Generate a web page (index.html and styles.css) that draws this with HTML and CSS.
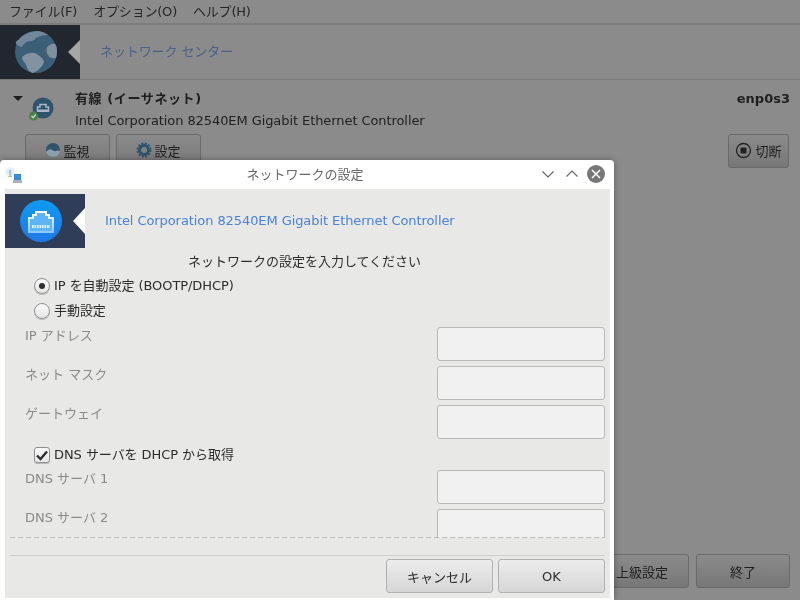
FILE: index.html
```html
<!DOCTYPE html>
<html lang="ja">
<head>
<meta charset="utf-8">
<title>ネットワークの設定</title>
<link rel="stylesheet" href="styles.css">
</head>
<body>
<div class="app">
  <nav class="menubar"><span>ファイル(F)</span><span>オプション(O)</span><span>ヘルプ(H)</span></nav>
  <header class="banner">
    <div class="banner-logo">
      <svg width="44" height="44" viewBox="0 0 44 44"><circle cx="22" cy="22" r="21" fill="#3c5f78"/><path d="M5 9Q13 1 25 1q5 1 9 4-7 0-12 3-3 4-8 3-4 2-6 6-3 0-6-3-1-3 4-5z" fill="#71889a"/><path d="M34 16q5-4 8-1 2 6 0 13-6 1-8-3-3-5 0-9z" fill="#7e909d"/><path d="M8 27q6-5 13-4 6 3 9 8-1 5-4 7-3 4-7 5-4-1-6-5-1-5-3-6-2-2-2-5z" fill="#8193a0"/></svg>
      <i class="notch notch-dim"></i>
    </div>
    <span class="banner-title">ネットワーク センター</span>
  </header>
  <section class="conn">
    <div class="conn-row">
      <span class="caret"></span>
      <svg class="conn-icon" width="28" height="28" viewBox="0 0 28 28"><circle cx="16" cy="12" r="10.500" fill="#2f536b"/><path d="M10.500 15v-4h2.500V8.500h6V11h2.500v4z" fill="none" stroke="#a9b8c2" stroke-width="1.500"/><path d="M10 13.500h12V16H10z" fill="#a9b8c2"/><circle cx="6.500" cy="20" r="4.500" fill="#4a8148"/><path d="M4.500 20l1.600 1.700 2.700-3.200" fill="none" stroke="#d5dfd5" stroke-width="1.200"/></svg>
      <div class="conn-text">
        <div class="conn-head"><b class="conn-name">有線 (イーサネット)</b><b>enp0s3</b></div>
        <div class="conn-desc">Intel Corporation 82540EM Gigabit Ethernet Controller</div>
      </div>
    </div>
    <div class="conn-actions">
      <div class="btn-group">
        <button class="btn btn-dim btn-wide"><svg width="16" height="16" viewBox="0 0 16 16"><circle cx="8" cy="8" r="7" fill="#2f536b"/><path d="M1 10q3-4 6-2t4 1 4 0q-1 6-7 6-5 0-7-5z" fill="#8ba0ad"/></svg>監視</button>
        <button class="btn btn-dim btn-wide"><svg width="16" height="16" viewBox="0 0 16 16"><circle cx="8" cy="8" r="4.500" fill="none" stroke="#2f536b" stroke-width="3"/><circle cx="8" cy="8" r="6.500" fill="none" stroke="#2f536b" stroke-width="2" stroke-dasharray="2 1.400"/></svg>設定</button>
      </div>
      <button class="btn btn-dim btn-stop"><svg width="17" height="17" viewBox="0 0 17 17"><circle cx="8.500" cy="8.500" r="7" fill="none" stroke="#222" stroke-width="1.300"/><rect x="5.500" y="5.500" width="6" height="6" rx="1" fill="#222"/></svg>切断</button>
    </div>
  </section>
  <footer class="app-footer">
    <button class="btn btn-dim btn-foot">上級設定</button>
    <button class="btn btn-dim btn-foot">終了</button>
  </footer>
</div>

<div class="dialog">
  <div class="titlebar">
    <svg class="tb-icon" width="18" height="18" viewBox="0 0 18 18"><defs><radialGradient id="glow"><stop offset="0" stop-color="#c6e4f5"/><stop offset="1" stop-color="#eef7fb"/></radialGradient></defs><circle cx="5" cy="5" r="5" fill="url(#glow)"/><path d="M4.500 3h1.200v6H4.500z" fill="#a5acb0"/><path d="M3 9h4v1H3z" fill="#b8bdc0"/><rect x="9" y="7" width="7" height="6" fill="#3b8ad2"/><rect x="8" y="13" width="9" height="3" fill="#aab0b5"/></svg>
    <span class="tb-title">ネットワークの設定</span>
    <div class="tb-controls">
      <svg width="14" height="14" viewBox="0 0 14 14"><path d="M1.500 4.500 7 10l5.500-5.500" fill="none" stroke="#666" stroke-width="1.200"/></svg>
      <svg width="14" height="14" viewBox="0 0 14 14"><path d="M1.500 9.500 7 4l5.500 5.500" fill="none" stroke="#666" stroke-width="1.200"/></svg>
      <svg class="tb-close" width="18" height="18" viewBox="0 0 18 18"><circle cx="9" cy="9" r="9" fill="#777"/><path d="M5 5l8 8M13 5l-8 8" stroke="#fff" stroke-width="1.500"/></svg>
    </div>
  </div>
  <div class="dlg-body">
    <div class="dlg-banner">
      <div class="dlg-logo">
        <svg width="42" height="42" viewBox="0 0 42 42"><defs><linearGradient id="blue" x1="0" y1="0" x2="0" y2="1"><stop offset="0" stop-color="#0f9bf0"/><stop offset="1" stop-color="#2078e6"/></linearGradient><linearGradient id="jack" x1="0" y1="0" x2="0" y2="1"><stop offset="0" stop-color="#ffffff"/><stop offset="1" stop-color="#8cc8f8"/></linearGradient></defs><circle cx="21" cy="21" r="21" fill="url(#blue)"/><path d="M9 32V18h4v-3h3v-3h10v3h3v3h4v14z" fill="#5fb4f4" stroke="url(#jack)" stroke-width="2"/><path d="M12 26.500h18" stroke="#e4f3fe" stroke-width="3" stroke-dasharray="1.700 0.800"/></svg>
        <i class="notch"></i>
      </div>
      <span class="dlg-banner-title">Intel Corporation 82540EM Gigabit Ethernet Controller</span>
    </div>
    <p class="prompt">ネットワークの設定を入力してください</p>
    <label class="choice choice-first"><span class="radio radio-on"></span>IP を自動設定 (BOOTP/DHCP)</label>
    <label class="choice"><span class="radio"></span>手動設定</label>
    <div class="field"><span>IP アドレス</span><i class="entry"></i></div>
    <div class="field"><span>ネット マスク</span><i class="entry"></i></div>
    <div class="field"><span>ゲートウェイ</span><i class="entry"></i></div>
    <label class="choice choice-check"><span class="check"><svg width="14" height="14" viewBox="0 0 14 14"><path d="M2 7.500l3.500 3.500L12 3.500" fill="none" stroke="#2d2d2d" stroke-width="2.400"/></svg></span>DNS サーバを DHCP から取得</label>
    <div class="field"><span>DNS サーバ 1</span><i class="entry"></i></div>
    <div class="field field-cut"><span>DNS サーバ 2</span><i class="entry"></i></div>
    <div class="dlg-footer">
      <button class="btn btn-dlg">キャンセル</button>
      <button class="btn btn-dlg">OK</button>
    </div>
  </div>
</div>
</body>
</html>
```
FILE: styles.css
```css
* { box-sizing: border-box; }
html, body { margin: 0; height: 100%; overflow: hidden; }
body {
  background: #8b8b8b;
  color: #1f1f1f;
  font: 13px "DejaVu Sans", "Noto Sans CJK JP", sans-serif;
  width: 800px;
  height: 600px;
  position: relative;
}
.app { height: 600px; display: flex; flex-direction: column; will-change: transform; }
.menubar {
  height: 25px;
  display: flex;
  gap: 16px;
  padding: 3px 9px 0;
  color: #262626;
  line-height: 17px;
  letter-spacing: -0.2px;
  border-bottom: 2px solid #7c7c7c;
}
.banner {
  height: 55px;
  display: flex;
  align-items: center;
  border-bottom: 1px solid #7a7a7a;
}
.banner-logo {
  width: 80px;
  height: 54px;
  background: #22262f;
  display: flex;
  align-items: center;
  padding-left: 14px;
  position: relative;
}
.notch {
  position: absolute;
  right: 0;
  top: 50%;
  margin-top: -13px;
  border-style: solid;
  border-width: 13px 12px 13px 0;
  border-color: transparent #fff transparent transparent;
}
.notch-dim { border-right-color: #a6a6a6; margin-top: -12px; border-width: 12px 12px 12px 0; }
.banner-title { margin: -3px 0 0 20px; color: #4d6185; letter-spacing: -0.1px; }
.conn { padding: 9px 10px 0 13px; }
.conn-row { display: flex; height: 42px; }
.caret {
  margin-top: 7px;
  width: 0;
  height: 0;
  border-style: solid;
  border-width: 5px 5px 0;
  border-color: #1d1d1d transparent transparent;
}
.conn-icon { margin: 7px 0 0 4px; }
.conn-text { flex: 1; margin-left: 20px; }
.conn-head { display: flex; justify-content: space-between; line-height: 20px; }
.conn-head b { font-weight: 700; }
.conn-name { letter-spacing: 0.6px; }
.conn-desc { margin-top: 2px; line-height: 20px; letter-spacing: -0.08px; }
.conn-actions { display: flex; justify-content: space-between; margin-top: 3px; padding: 0 1px 0 12px; }
.btn-group { display: flex; gap: 6px; }
.btn {
  font: inherit;
  color: inherit;
  border-radius: 3px;
  padding: 0;
  display: flex;
  align-items: center;
  justify-content: center;
  gap: 2px;
}
.btn-dim {
  background: linear-gradient(#8b8b8b, #777);
  border: 1px solid #6a6a6a;
}
.btn-wide { width: 85px; height: 34px; padding-bottom: 2px; }
.btn-stop { width: 61px; height: 34px; gap: 3px; padding-bottom: 2px; }
.app-footer {
  margin-top: auto;
  display: flex;
  justify-content: flex-end;
  gap: 7px;
  padding-right: 10px;
  height: 46px;
}
.btn-foot { width: 94px; height: 34px; }
.dialog {
  position: absolute;
  left: 0;
  top: 160px;
  width: 614px;
  height: 440px;
  background: #fff;
  border-radius: 4px 4px 0 0;
  box-shadow: 0 0 6px rgba(0, 0, 0, 0.35);
  display: flex;
  flex-direction: column;
  will-change: transform;
}
.titlebar {
  height: 29px;
  flex: none;
  display: flex;
  align-items: center;
  justify-content: center;
  position: relative;
  color: #666;
}
.tb-icon { position: absolute; left: 5px; top: 7px; }
.tb-title { margin-right: 4px; line-height: 29px; }
.tb-controls {
  position: absolute;
  right: 9px;
  top: 5px;
  display: flex;
  align-items: center;
  gap: 10px;
  height: 18px;
}
.tb-close { margin-left: -2px; }
.dlg-body {
  flex: 1;
  margin: 0 4px 2px 5px;
  background: #e8e8e7;
  padding-top: 5px;
  overflow: hidden;
  position: relative;
  display: flex;
  flex-direction: column;
}
.dlg-banner { display: flex; align-items: center; height: 54px; flex: none; }
.dlg-logo {
  width: 80px;
  height: 54px;
  background: #2f3d58;
  padding-left: 15px;
  display: flex;
  align-items: center;
  position: relative;
}
.dlg-banner-title { margin: -1px 0 0 20px; color: #4a82d6; letter-spacing: -0.08px; }
.prompt { margin: 4px 0 0; padding-right: 6px; text-align: center; line-height: 20px; color: #2c2c2c; }
.choice { display: flex; align-items: center; gap: 4px; line-height: 20px; color: #2c2c2c; margin-left: 29px; letter-spacing: -0.06px; }
.choice-first { margin-top: 4px; height: 20px; }
.choice + .choice { margin-top: 5px; }
.radio {
  width: 16px;
  height: 16px;
  border-radius: 50%;
  border: 1px solid #8f8f8f;
  background: linear-gradient(#fafafa, #e6e6e6);
  display: flex;
  align-items: center;
  justify-content: center;
  box-shadow: 0 1px 0 #bbb;
}
.radio-on::after { content: ""; width: 6px; height: 6px; border-radius: 50%; background: #2d2d2d; }
.field {
  display: flex;
  justify-content: space-between;
  align-items: flex-start;
  height: 39px;
  padding: 0 5px 0 20px;
  color: #8a8a8a;
  line-height: 17px;
  flex: none;
}
.choice + .field { margin-top: 6px; }
.choice-check { height: 20px; flex: none; margin-top: 1px; }
.choice-check + .field { margin-top: 5px; }
.entry {
  width: 168px;
  height: 34px;
  background: #f1f1f1;
  border: 1px solid #b9b9b9;
  border-radius: 3px;
}
.field-cut { height: 29px; overflow: hidden; }
.check {
  width: 16px;
  height: 16px;
  border: 1px solid #8f8f8f;
  border-radius: 3px;
  background: linear-gradient(#fafafa, #e6e6e6);
  display: flex;
  align-items: center;
  justify-content: center;
  box-shadow: 0 1px 0 #bbb;
}
.dlg-footer {
  position: absolute;
  left: 0;
  right: 0;
  bottom: 0;
  height: 61px;
  background: #e8e8e7;
  display: flex;
  justify-content: flex-end;
  align-items: flex-end;
  gap: 5px;
  padding: 0 5px 5px 0;
}
.dlg-footer::before {
  content: "";
  position: absolute;
  left: 5px;
  right: 5px;
  top: 0;
  height: 18px;
  background: repeating-linear-gradient(90deg, #bcbcbc 0 5px, transparent 5px 8px) top / 100% 1px no-repeat;
  border-bottom: 1px solid #cfcfcf;
}
.btn-dlg {
  width: 107px;
  height: 34px;
  background: linear-gradient(#ececec, #d6d6d6);
  border: 1px solid #b0b0b0;
  color: #2c2c2c;
}
```
